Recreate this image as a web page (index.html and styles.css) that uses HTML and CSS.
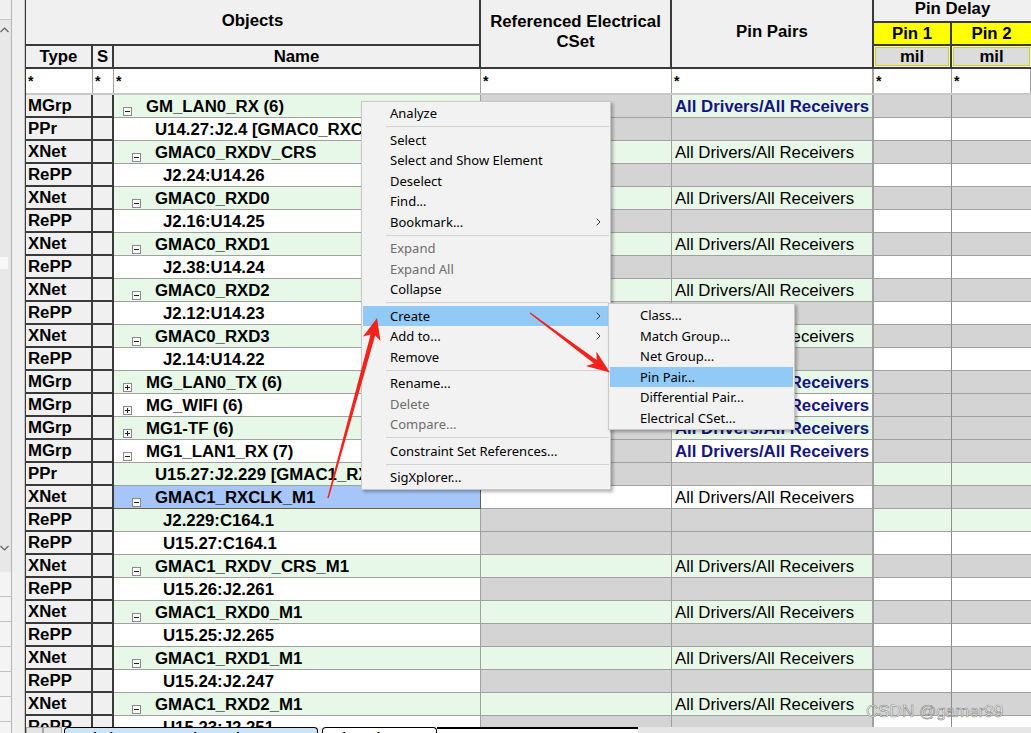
FILE: index.html
```html
<!DOCTYPE html>
<html>
<head>
<meta charset="utf-8">
<link rel="stylesheet" href="styles.css">
</head>
<body>
<div class="window">
  <div class="leftpane">
    <div class="lp-a">
      <div class="lp-top"></div>
      <div class="lp-track">
        <svg class="chev-up" width="9" height="6" viewBox="0 0 9 6"><polyline points="0.5,5 4.5,1 8.5,5" fill="none" stroke="#606060" stroke-width="1.2"/></svg>
        <div class="lp-thumb"></div>
        <svg class="chev-down" width="9" height="6" viewBox="0 0 9 6"><polyline points="0.5,1 4.5,5 8.5,1" fill="none" stroke="#606060" stroke-width="1.2"/></svg>
      </div>
      <div class="lp-list">
        <div class="lp-item"></div><div class="lp-item"></div><div class="lp-item"></div><div class="lp-item"></div><div class="lp-item"></div><div class="lp-item"></div><div class="lp-item"></div>
      </div>
    </div>
    <div class="lp-b"></div>
  </div>

  <div class="sheet">
    <div class="head cols">
      <div class="h h-obj">Objects</div>
      <div class="h h-type">Type</div>
      <div class="h h-s">S</div>
      <div class="h h-name">Name</div>
      <div class="h h-ref">Referenced Electrical<br>CSet</div>
      <div class="h h-pp">Pin Pairs</div>
      <div class="h h-pd">Pin Delay</div>
      <div class="h h-p1 yellow">Pin 1</div>
      <div class="h h-p2 yellow">Pin 2</div>
      <div class="h h-m1 mil"><span class="mil-in">mil</span></div>
      <div class="h h-m2 mil"><span class="mil-in">mil</span></div>
    </div>

    <div class="filter cols">
      <div class="f f-dark">*</div><div class="f f-dark">*</div><div class="f">*</div><div class="f">*</div><div class="f f-pp">*</div><div class="f">*</div><div class="f">*</div>
    </div>

    <div class="rows">
      <div class="row cols odd">
        <div class="c c-type">MGrp</div><div class="c c-s"></div>
        <div class="c c-name n0"><span class="box"></span>GM_LAN0_RX (6)</div>
        <div class="c c-ref gray"></div><div class="c c-pp alt navy">All Drivers/All Receivers</div><div class="c c-p1 gray"></div><div class="c c-p2 gray"></div>
      </div>
      <div class="row cols even">
        <div class="c c-type">PPr</div><div class="c c-s"></div>
        <div class="c c-name t1">U14.27:J2.4 [GMAC0_RXCLK]</div>
        <div class="c c-ref gray"></div><div class="c c-pp gray"></div><div class="c c-p1 alt"></div><div class="c c-p2 alt"></div>
      </div>
      <div class="row cols odd">
        <div class="c c-type">XNet</div><div class="c c-s"></div>
        <div class="c c-name n1"><span class="box"></span>GMAC0_RXDV_CRS</div>
        <div class="c c-ref alt"></div><div class="c c-pp alt">All Drivers/All Receivers</div><div class="c c-p1 gray"></div><div class="c c-p2 gray"></div>
      </div>
      <div class="row cols even">
        <div class="c c-type">RePP</div><div class="c c-s"></div>
        <div class="c c-name t2">J2.24:U14.26</div>
        <div class="c c-ref gray"></div><div class="c c-pp gray"></div><div class="c c-p1 alt"></div><div class="c c-p2 alt"></div>
      </div>
      <div class="row cols odd">
        <div class="c c-type">XNet</div><div class="c c-s"></div>
        <div class="c c-name n1"><span class="box"></span>GMAC0_RXD0</div>
        <div class="c c-ref alt"></div><div class="c c-pp alt">All Drivers/All Receivers</div><div class="c c-p1 gray"></div><div class="c c-p2 gray"></div>
      </div>
      <div class="row cols even">
        <div class="c c-type">RePP</div><div class="c c-s"></div>
        <div class="c c-name t2">J2.16:U14.25</div>
        <div class="c c-ref gray"></div><div class="c c-pp gray"></div><div class="c c-p1 alt"></div><div class="c c-p2 alt"></div>
      </div>
      <div class="row cols odd">
        <div class="c c-type">XNet</div><div class="c c-s"></div>
        <div class="c c-name n1"><span class="box"></span>GMAC0_RXD1</div>
        <div class="c c-ref alt"></div><div class="c c-pp alt">All Drivers/All Receivers</div><div class="c c-p1 gray"></div><div class="c c-p2 gray"></div>
      </div>
      <div class="row cols even">
        <div class="c c-type">RePP</div><div class="c c-s"></div>
        <div class="c c-name t2">J2.38:U14.24</div>
        <div class="c c-ref gray"></div><div class="c c-pp gray"></div><div class="c c-p1 alt"></div><div class="c c-p2 alt"></div>
      </div>
      <div class="row cols odd">
        <div class="c c-type">XNet</div><div class="c c-s"></div>
        <div class="c c-name n1"><span class="box"></span>GMAC0_RXD2</div>
        <div class="c c-ref alt"></div><div class="c c-pp alt">All Drivers/All Receivers</div><div class="c c-p1 gray"></div><div class="c c-p2 gray"></div>
      </div>
      <div class="row cols even">
        <div class="c c-type">RePP</div><div class="c c-s"></div>
        <div class="c c-name t2">J2.12:U14.23</div>
        <div class="c c-ref gray"></div><div class="c c-pp gray"></div><div class="c c-p1 alt"></div><div class="c c-p2 alt"></div>
      </div>
      <div class="row cols odd">
        <div class="c c-type">XNet</div><div class="c c-s"></div>
        <div class="c c-name n1"><span class="box"></span>GMAC0_RXD3</div>
        <div class="c c-ref alt"></div><div class="c c-pp alt">All Drivers/All Receivers</div><div class="c c-p1 gray"></div><div class="c c-p2 gray"></div>
      </div>
      <div class="row cols even">
        <div class="c c-type">RePP</div><div class="c c-s"></div>
        <div class="c c-name t2">J2.14:U14.22</div>
        <div class="c c-ref gray"></div><div class="c c-pp gray"></div><div class="c c-p1 alt"></div><div class="c c-p2 alt"></div>
      </div>
      <div class="row cols odd">
        <div class="c c-type">MGrp</div><div class="c c-s"></div>
        <div class="c c-name n0"><span class="box plus"></span>MG_LAN0_TX (6)</div>
        <div class="c c-ref gray"></div><div class="c c-pp alt navy">All Drivers/All Receivers</div><div class="c c-p1 gray"></div><div class="c c-p2 gray"></div>
      </div>
      <div class="row cols even">
        <div class="c c-type">MGrp</div><div class="c c-s"></div>
        <div class="c c-name n0"><span class="box plus"></span>MG_WIFI (6)</div>
        <div class="c c-ref gray"></div><div class="c c-pp alt navy">All Drivers/All Receivers</div><div class="c c-p1 gray"></div><div class="c c-p2 gray"></div>
      </div>
      <div class="row cols odd">
        <div class="c c-type">MGrp</div><div class="c c-s"></div>
        <div class="c c-name n0"><span class="box plus"></span>MG1-TF (6)</div>
        <div class="c c-ref gray"></div><div class="c c-pp alt navy">All Drivers/All Receivers</div><div class="c c-p1 gray"></div><div class="c c-p2 gray"></div>
      </div>
      <div class="row cols even">
        <div class="c c-type">MGrp</div><div class="c c-s"></div>
        <div class="c c-name n0"><span class="box"></span>MG1_LAN1_RX (7)</div>
        <div class="c c-ref gray"></div><div class="c c-pp alt navy">All Drivers/All Receivers</div><div class="c c-p1 gray"></div><div class="c c-p2 gray"></div>
      </div>
      <div class="row cols odd">
        <div class="c c-type">PPr</div><div class="c c-s"></div>
        <div class="c c-name t1">U15.27:J2.229 [GMAC1_RXCLK_M1]</div>
        <div class="c c-ref gray"></div><div class="c c-pp gray"></div><div class="c c-p1 alt"></div><div class="c c-p2 alt"></div>
      </div>
      <div class="row cols even">
        <div class="c c-type">XNet</div><div class="c c-s"></div>
        <div class="c c-name n1 selected"><span class="box"></span>GMAC1_RXCLK_M1</div>
        <div class="c c-ref alt"></div><div class="c c-pp alt">All Drivers/All Receivers</div><div class="c c-p1 gray"></div><div class="c c-p2 gray"></div>
      </div>
      <div class="row cols odd">
        <div class="c c-type">RePP</div><div class="c c-s"></div>
        <div class="c c-name t2">J2.229:C164.1</div>
        <div class="c c-ref gray"></div><div class="c c-pp gray"></div><div class="c c-p1 alt"></div><div class="c c-p2 alt"></div>
      </div>
      <div class="row cols even">
        <div class="c c-type">RePP</div><div class="c c-s"></div>
        <div class="c c-name t2">U15.27:C164.1</div>
        <div class="c c-ref gray"></div><div class="c c-pp gray"></div><div class="c c-p1 alt"></div><div class="c c-p2 alt"></div>
      </div>
      <div class="row cols odd">
        <div class="c c-type">XNet</div><div class="c c-s"></div>
        <div class="c c-name n1"><span class="box"></span>GMAC1_RXDV_CRS_M1</div>
        <div class="c c-ref alt"></div><div class="c c-pp alt">All Drivers/All Receivers</div><div class="c c-p1 gray"></div><div class="c c-p2 gray"></div>
      </div>
      <div class="row cols even">
        <div class="c c-type">RePP</div><div class="c c-s"></div>
        <div class="c c-name t2">U15.26:J2.261</div>
        <div class="c c-ref gray"></div><div class="c c-pp gray"></div><div class="c c-p1 alt"></div><div class="c c-p2 alt"></div>
      </div>
      <div class="row cols odd">
        <div class="c c-type">XNet</div><div class="c c-s"></div>
        <div class="c c-name n1"><span class="box"></span>GMAC1_RXD0_M1</div>
        <div class="c c-ref alt"></div><div class="c c-pp alt">All Drivers/All Receivers</div><div class="c c-p1 gray"></div><div class="c c-p2 gray"></div>
      </div>
      <div class="row cols even">
        <div class="c c-type">RePP</div><div class="c c-s"></div>
        <div class="c c-name t2">U15.25:J2.265</div>
        <div class="c c-ref gray"></div><div class="c c-pp gray"></div><div class="c c-p1 alt"></div><div class="c c-p2 alt"></div>
      </div>
      <div class="row cols odd">
        <div class="c c-type">XNet</div><div class="c c-s"></div>
        <div class="c c-name n1"><span class="box"></span>GMAC1_RXD1_M1</div>
        <div class="c c-ref alt"></div><div class="c c-pp alt">All Drivers/All Receivers</div><div class="c c-p1 gray"></div><div class="c c-p2 gray"></div>
      </div>
      <div class="row cols even">
        <div class="c c-type">RePP</div><div class="c c-s"></div>
        <div class="c c-name t2">U15.24:J2.247</div>
        <div class="c c-ref gray"></div><div class="c c-pp gray"></div><div class="c c-p1 alt"></div><div class="c c-p2 alt"></div>
      </div>
      <div class="row cols odd">
        <div class="c c-type">XNet</div><div class="c c-s"></div>
        <div class="c c-name n1"><span class="box"></span>GMAC1_RXD2_M1</div>
        <div class="c c-ref alt"></div><div class="c c-pp alt">All Drivers/All Receivers</div><div class="c c-p1 gray"></div><div class="c c-p2 gray"></div>
      </div>
      <div class="row cols even">
        <div class="c c-type">RePP</div><div class="c c-s"></div>
        <div class="c c-name t2">U15.23:J2.251</div>
        <div class="c c-ref gray"></div><div class="c c-pp gray"></div><div class="c c-p1 alt"></div><div class="c c-p2 alt"></div>
      </div>
    </div>

    <div class="tabs">
      <div class="tb-btn"></div>
      <div class="tb-btn tb-btn2"></div>
      <div class="tab tab-active">Relative Propagation Delay</div>
      <div class="tab tab2">Pin Delay</div>
      <div class="tab-fill"></div>
      <div class="hscroll">
        <svg width="6" height="8" viewBox="0 0 6 8"><polyline points="5,0.5 1,4 5,7.5" fill="none" stroke="#808080" stroke-width="1.2"/></svg>
      </div>
    </div>
  </div>
</div>

<div class="menu">
  <div class="mi">Analyze</div>
  <div class="msep"></div>
  <div class="mi">Select</div>
  <div class="mi">Select and Show Element</div>
  <div class="mi">Deselect</div>
  <div class="mi">Find...</div>
  <div class="mi">Bookmark...<svg class="sub" width="5" height="8" viewBox="0 0 5 8"><polyline points="0.6,0.6 4,4 0.6,7.4" fill="none" stroke="#404040" stroke-width="1"/></svg></div>
  <div class="msep"></div>
  <div class="mi dis">Expand</div>
  <div class="mi dis">Expand All</div>
  <div class="mi">Collapse</div>
  <div class="msep"></div>
  <div class="mi hot">Create<svg class="sub" width="5" height="8" viewBox="0 0 5 8"><polyline points="0.6,0.6 4,4 0.6,7.4" fill="none" stroke="#404040" stroke-width="1"/></svg></div>
  <div class="mi">Add to...<svg class="sub" width="5" height="8" viewBox="0 0 5 8"><polyline points="0.6,0.6 4,4 0.6,7.4" fill="none" stroke="#404040" stroke-width="1"/></svg></div>
  <div class="mi">Remove</div>
  <div class="msep"></div>
  <div class="mi">Rename...</div>
  <div class="mi dis">Delete</div>
  <div class="mi dis">Compare...</div>
  <div class="msep"></div>
  <div class="mi">Constraint Set References...</div>
  <div class="msep"></div>
  <div class="mi">SigXplorer...</div>
</div>

<div class="menu submenu">
  <div class="mi">Class...</div>
  <div class="mi">Match Group...</div>
  <div class="mi">Net Group...</div>
  <div class="mi hot">Pin Pair...</div>
  <div class="mi">Differential Pair...</div>
  <div class="mi">Electrical CSet...</div>
</div>

<svg class="arrows" width="1031" height="733" viewBox="0 0 1031 733">
  <polygon fill="#f5221b" points="377,318 380.5,341 375.2,335.6 328.8,498.1 327.3,497.9 370.6,334.4 363,336.5"/>
  <polygon fill="#f5221b" points="610,372.5 585.8,366 594,363.6 529.6,313.6 530.4,312.4 596.7,360 596.4,351.4"/>
</svg>

<div class="watermark">CSDN @gamer99</div>
</body>
</html>
```

FILE: styles.css
```css
* { box-sizing: border-box; }
html, body { margin: 0; padding: 0; }
body {
  width: 1031px;
  height: 733px;
  overflow: hidden;
  background: #f0f0f0;
  font-family: "Liberation Sans", Arial, sans-serif;
  color: #000;
  position: relative;
}

.window { display: flex; height: 733px; }

/* left pane */
.leftpane { width: 25px; flex: none; display: flex; height: 733px; }
.lp-a { width: 12px; display: flex; flex-direction: column; border-right: 1px solid #b4b4b4; background: #f0f0f0; }
.lp-top { height: 20px; border-bottom: 1px solid #c8c8c8; flex: none; }
.lp-track { height: 552px; flex: none; background: #e8e8e8; display: flex; flex-direction: column; align-items: flex-start; }
.chev-up { margin: 7px 0 0 0; }
.lp-thumb { width: 8px; height: 12px; background: #f8f8f8; margin-top: 224px; }
.chev-down { margin-top: 276px; }
.lp-list { flex: 1; }
.lp-item { height: 25px; border-bottom: 1px solid #c0c0c0; background: #f4f4f4; }
.lp-b { width: 13px; background: #f0f0f0; border-right: 1px solid #c8c8c8; }

/* sheet */
.sheet { width: 1006px; flex: none; border-left: 1px solid #3a3a3a; display: flex; flex-direction: column; height: 733px; overflow: hidden; }
.cols { display: grid; grid-template-columns: 67px 21px 367px 191px 202px 78px 79px; }

.head { grid-template-rows: 23px 23px 23px; background: #f0f0f0; height: 69px; flex: none; }
.h {
  display: flex; align-items: center; justify-content: center; text-align: center;
  font-weight: bold; font-size: 16.8px; line-height: 20px; padding-top: 1px;
  border-right: 2px solid #3a3a3a; border-bottom: 2px solid #3a3a3a;
}
.h-obj { grid-column: 1 / 4; grid-row: 1 / 3; padding-bottom: 3px; }
.h-type { grid-column: 1; grid-row: 3; }
.h-s { grid-column: 2; grid-row: 3; }
.h-name { grid-column: 3; grid-row: 3; }
.h-ref { grid-column: 4; grid-row: 1 / 4; padding-bottom: 5px; }
.h-pp { grid-column: 5; grid-row: 1 / 4; padding-bottom: 5px; }
.h-pd { grid-column: 6 / 8; grid-row: 1; padding-bottom: 4px; border-right: none; }
.h-p1 { grid-column: 6; grid-row: 2; }
.h-p2 { grid-column: 7; grid-row: 2; border-right: none; }
.h-m1 { grid-column: 6; grid-row: 3; }
.h-m2 { grid-column: 7; grid-row: 3; border-right: none; }
.yellow { background: #ffff00; }
.mil { padding: 1px; align-items: stretch; }
.mil-in { flex: 1; display: flex; align-items: center; justify-content: center; background: #dcdcdc; border: 1px solid #d4d400; padding-top: 1px; }

.filter { height: 26px; flex: none; background: #fff; border-bottom: 2px solid #c8c8c8; }
.f { font-size: 14px; font-weight: bold; padding: 5px 0 0 2px; border-right: 1px solid #a0a0a0; line-height: 14px; }
.f-pp { border-right: 2px solid #a0a0a0; }

/* data rows */
.rows { height: 632px; flex: none; overflow: hidden; }
.row { height: 23px; }
.row.odd { --alt: #e8f8e8; }
.row.even { --alt: #ffffff; }
.c {
  display: flex; align-items: center; white-space: nowrap; overflow: hidden;
  font-size: 16.8px; padding-top: 1px;
  border-right: 1px solid #a0a0a0; border-bottom: 1px solid #a0a0a0;
}
.c-type { background: #f0f0f0; font-weight: bold; padding-left: 2px; border-right: 2px solid #3a3a3a; border-bottom: 2px solid #3a3a3a; }
.c-s { background: #f0f0f0; border-right: 2px solid #3a3a3a; border-bottom: 2px solid #3a3a3a; }
.c-name { font-weight: bold; background: var(--alt); }
.c-pp { padding-left: 3px; border-right: 2px solid #a0a0a0; }
.c-p1 { border-right: 1px solid #8c8c8c; }
.c-p2 { border-right: none; }
.alt { background: var(--alt); }
.gray { background: #d4d4d4; }
.navy { color: #141482; font-weight: bold; }

.n0 { padding-left: 9px; }
.n1 { padding-left: 18px; }
.t1 { padding-left: 41px; }
.t2 { padding-left: 49px; }
.selected { background: #a6c6fa; border-bottom: 1px solid #6e5c40; border-right: 1px solid #6e5c40; }

.box {
  width: 9px; height: 9px; flex: none; border: 1px solid #8a8a8a; background: #fafafa;
  align-self: flex-end; margin-bottom: 1px; margin-right: 14px; position: relative;
}
.box::before { content: ""; position: absolute; left: 1px; right: 1px; top: 3px; height: 1px; background: #202020; }
.box.plus::after { content: ""; position: absolute; top: 1px; bottom: 1px; left: 3px; width: 1px; background: #202020; }

/* bottom tabs */
.tabs { height: 22px; flex: none; display: flex; background: #f0f0f0; }
.tb-btn { width: 17px; background: #e4e4e4; border: 1px solid #a8a8a8; }
.tb-btn2 { width: 19px; margin-right: 2px; }
.tab { font-size: 14px; font-weight: bold; padding: 2px 0 0 10px; border-top: 1px solid #000; border-left: 1px solid #000; border-right: 1px solid #000; border-radius: 4px 4px 0 0; white-space: nowrap; overflow: hidden; }
.tab-active { width: 254px; background: #cde4f6; }
.tab2 { width: 115px; background: #fff; margin-left: 4px; }
.tab-fill { width: 201px; background: #fff; border-top: 2px solid #000; }
.hscroll { flex: 1; background: #e6e6e6; padding: 2px 0 0 6px; }

/* context menus */
.menu {
  position: absolute; left: 361px; top: 101px; width: 250px;
  background: #f2f2f2; border: 1px solid #c8c8c8; padding: 1px;
  box-shadow: 2px 2px 3px rgba(0,0,0,0.3);
  font-family: "Noto Sans", "Open Sans", sans-serif; font-size: 13px; color: #000;
}
.mi { height: 20.5px; display: flex; align-items: center; padding-left: 27px; white-space: nowrap; }
.mi.dis { color: #6d6d6d; }
.mi.hot { background: #91c9f7; }
.sub { margin-left: auto; margin-right: 8px; }
.msep { height: 6px; display: flex; align-items: center; padding-left: 23px; }
.msep::after { content: ""; flex: 1; height: 1px; background: #d2d2d2; }

.submenu { left: 608px; top: 303px; width: 187px; padding: 1px; }
.submenu .mi { padding-left: 30px; }

.arrows { position: absolute; left: 0; top: 0; pointer-events: none; }

.watermark {
  position: absolute; left: 866px; top: 702px;
  font-family: "Liberation Sans", Arial, sans-serif; font-size: 17px;
  color: rgba(255,255,255,0.9);
  -webkit-text-stroke: 0.6px rgba(110,110,110,0.85);
  pointer-events: none;
}
```
